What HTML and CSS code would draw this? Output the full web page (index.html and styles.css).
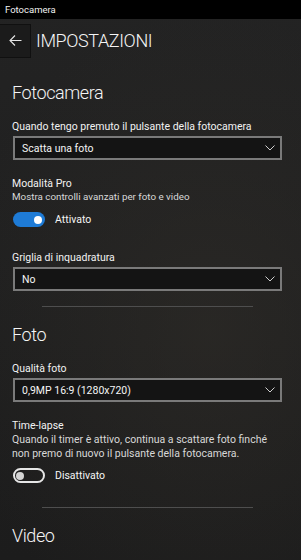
FILE: index.html
```html
<!DOCTYPE html>
<html lang="it">
<head>
<meta charset="utf-8">
<link rel="stylesheet" href="styles.css">
</head>
<body>
<div class="titlebar">Fotocamera</div>
<div class="header">
  <div class="back">
    <svg width="13" height="11" viewBox="0 0 13 11"><path d="M6 0.5 L1 5.5 L6 10.5 M1 5.5 H12.5" fill="none" stroke="#e6e6e6" stroke-width="1.1"/></svg>
  </div>
  <div class="page-title">IMPOSTAZIONI</div>
</div>
<div class="content">
  <h2 class="section first">Fotocamera</h2>
  <div class="label">Quando tengo premuto il pulsante della fotocamera</div>
  <div class="select"><span>Scatta una foto</span><svg class="chev" width="10" height="6" viewBox="0 0 10 6"><path d="M0.5 0.5 L5 5 L9.5 0.5" fill="none" stroke="#cfcfcf" stroke-width="1"/></svg></div>

  <div class="label strong">Modalità Pro</div>
  <div class="desc">Mostra controlli avanzati per foto e video</div>
  <div class="toggle-row"><div class="toggle on"><div class="knob"></div></div><span>Attivato</span></div>

  <div class="label grid-label">Griglia di inquadratura</div>
  <div class="select"><span>No</span><svg class="chev" width="10" height="6" viewBox="0 0 10 6"><path d="M0.5 0.5 L5 5 L9.5 0.5" fill="none" stroke="#cfcfcf" stroke-width="1"/></svg></div>

  <div class="sep"></div>

  <h2 class="section">Foto</h2>
  <div class="label">Qualità foto</div>
  <div class="select"><span>0,9MP 16:9 (1280x720)</span><svg class="chev" width="10" height="6" viewBox="0 0 10 6"><path d="M0.5 0.5 L5 5 L9.5 0.5" fill="none" stroke="#cfcfcf" stroke-width="1"/></svg></div>

  <div class="label strong">Time-lapse</div>
  <div class="desc long">Quando il timer è attivo, continua a scattare foto finché<br>non premo di nuovo il pulsante della fotocamera.</div>
  <div class="toggle-row"><div class="toggle off"><div class="knob"></div></div><span>Disattivato</span></div>

  <div class="sep second"></div>

  <h2 class="section">Video</h2>
</div>
</body>
</html>
```
FILE: styles.css
```css
html, body {
  margin: 0;
  padding: 0;
}
body {
  width: 301px;
  height: 560px;
  overflow: hidden;
  font-family: Roboto, "Liberation Sans", sans-serif;
  color: #ffffff;
  background:
    radial-gradient(ellipse 260px 320px at 210px 330px, rgba(50, 47, 42, 0.5), rgba(0,0,0,0) 100%),
    linear-gradient(#232323, #1f1f1f 60%, #1c1c1c);
}
.titlebar {
  height: 19px;
  line-height: 19px;
  background: #000000;
  font-size: 9.5px;
  padding-left: 5px;
  color: #f2f2f2;
}
.header {
  display: flex;
  align-items: center;
  padding-top: 5px;
  height: 33px;
}
.back {
  width: 30px;
  height: 32px;
  border: 1px solid #101010;
  border-left: none;
  background: #1b1b1b;
  display: flex;
  align-items: center;
  justify-content: center;
}
.page-title {
  margin-left: 5px;
  margin-top: -1px;
  font-size: 18px;
  font-weight: 300;
  letter-spacing: -0.4px;
  color: #f5f5f5;
}
.content {
  padding: 0 19px 0 12px;
}
.section {
  margin: 15px 0 0;
  font-size: 18px;
  font-weight: 300;
  letter-spacing: -0.4px;
  line-height: 26px;
  color: #f5f5f5;
}
.section.first {
  margin-top: 23px;
}
.label {
  font-size: 10.5px;
  line-height: 14px;
  color: #f2f2f2;
  margin-top: 14px;
  white-space: nowrap;
}
.label.strong {
  margin-top: 17px;
}
.grid-label {
  margin-top: 24px;
}
.desc {
  font-size: 9.8px;
  line-height: 13px;
  color: #d8d8d8;
  margin-top: -1px;
  white-space: nowrap;
}
.desc.long {
  font-size: 10.5px;
  line-height: 14px;
  margin-top: 0;
}
.select {
  margin-top: 2px;
  margin-left: 1px;
  height: 20px;
  border: 2px solid #7a7a7a;
  background: #141414;
  display: flex;
  align-items: center;
  justify-content: space-between;
  padding: 0 5px 0 7px;
  font-size: 10.5px;
  color: #f5f5f5;
}
.chev {
  display: block;
}
.toggle-row {
  display: flex;
  align-items: center;
  margin-top: 9px;
  margin-left: 1px;
  font-size: 10.5px;
  color: #f5f5f5;
}
.desc.long + .toggle-row {
  margin-top: 7px;
}
.toggle {
  width: 32px;
  height: 15px;
  border-radius: 8px;
  box-sizing: border-box;
  position: relative;
  margin-right: 10px;
}
.toggle.on {
  background: #1e7bd6;
}
.toggle.off {
  border: 2px solid #e6e6e6;
}
.knob {
  position: absolute;
  width: 8px;
  height: 8px;
  border-radius: 50%;
}
.toggle.on .knob {
  background: #ffffff;
  top: 3.5px;
  right: 3px;
}
.toggle.off .knob {
  background: #d4d4d4;
  top: 1.5px;
  left: 1px;
}
.sep {
  height: 1px;
  background: #4e4e4e;
  margin: 15px 29px 0 30px;
}
.sep.second {
  margin-top: 24px;
}
```
